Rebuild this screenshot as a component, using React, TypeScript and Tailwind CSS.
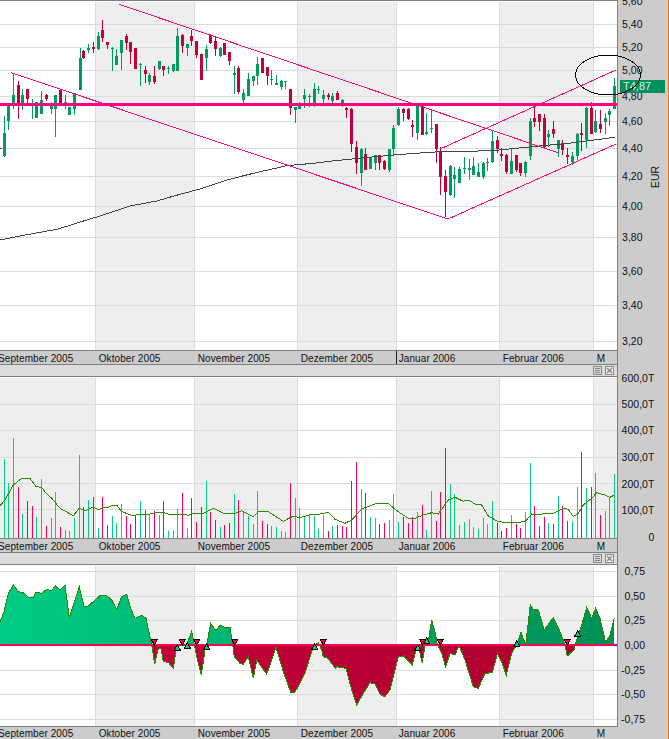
type Candle = [number, number, number, number, number, "g" | "r"]
type Bar = [number, number, "g" | "r"]
type Point = [number, number]

const GREEN = "#009c5e"
const RED = "#c4003a"
const PINK = "#f5107f"
const GRID = "#dcdcdc"
const SHADE = "#eeeeee"

// All series were read off the 3x crops: x is 3x page x, the right half starts at 1005
const candlesLeft: Candle[] = [
  [0, 445, 449, 445, 449, "r"], [13, 348, 470, 400, 470, "g"], [25, 316, 392, 316, 365, "g"], [40, 218, 325, 285, 310, "g"],
  [55, 243, 356, 255, 313, "r"], [67, 268, 330, 285, 310, "g"], [82, 268, 310, 268, 298, "r"], [97, 297, 356, 313, 316, "g"],
  [109, 307, 356, 307, 356, "g"], [124, 274, 342, 300, 342, "g"], [139, 283, 303, 286, 297, "r"], [154, 307, 342, 318, 327, "g"],
  [166, 285, 410, 285, 327, "g"], [181, 267, 313, 270, 313, "r"], [196, 286, 327, 307, 310, "g"], [208, 322, 345, 322, 345, "g"],
  [223, 278, 345, 279, 327, "g"], [239, 145, 270, 175, 270, "g"], [250, 150, 178, 153, 175, "r"], [265, 132, 158, 144, 150, "g"],
  [280, 125, 158, 141, 147, "r"], [295, 97, 150, 108, 147, "g"], [307, 60, 125, 90, 114, "r"], [322, 125, 147, 126, 135, "r"],
  [337, 142, 213, 144, 147, "g"], [349, 148, 195, 168, 195, "g"], [364, 120, 210, 120, 158, "g"], [379, 102, 150, 108, 129, "r"],
  [391, 126, 192, 126, 156, "r"], [406, 144, 207, 144, 207, "r"], [421, 189, 258, 191, 195, "g"], [436, 198, 250, 210, 222, "r"],
  [448, 219, 255, 225, 246, "g"], [463, 198, 252, 228, 246, "r"], [478, 183, 210, 183, 207, "g"], [490, 198, 228, 198, 210, "r"],
  [505, 198, 222, 204, 207, "g"], [520, 192, 215, 192, 213, "g"], [532, 84, 213, 108, 213, "g"], [547, 102, 160, 105, 138, "r"],
  [562, 132, 168, 132, 144, "g"], [574, 90, 138, 108, 123, "r"], [589, 123, 174, 123, 165, "r"], [604, 162, 240, 162, 240, "r"],
  [619, 135, 213, 147, 174, "g"], [631, 102, 132, 105, 129, "r"], [646, 108, 168, 123, 147, "r"], [661, 141, 171, 144, 168, "g"],
  [673, 129, 165, 129, 165, "r"], [688, 156, 195, 156, 183, "r"], [703, 198, 282, 219, 224, "g"], [715, 198, 282, 204, 276, "r"],
  [730, 267, 312, 279, 300, "g"], [745, 219, 288, 237, 288, "g"], [760, 228, 258, 228, 243, "g"], [772, 171, 255, 192, 228, "g"],
  [787, 174, 219, 174, 219, "r"], [802, 201, 255, 201, 228, "r"], [814, 210, 255, 237, 240, "g"], [829, 225, 255, 249, 255, "g"],
  [844, 240, 270, 243, 261, "g"], [856, 243, 268, 243, 246, "g"], [871, 267, 345, 267, 324, "r"], [886, 320, 368, 321, 330, "g"],
  [898, 306, 327, 315, 327, "g"], [913, 267, 325, 285, 297, "g"], [928, 282, 321, 288, 290, "g"], [943, 249, 320, 267, 310, "g"],
  [955, 258, 282, 267, 269, "g"], [970, 270, 310, 285, 297, "g"], [985, 279, 300, 285, 291, "r"], [997, 279, 310, 288, 303, "g"],
]

const candlesRight: Candle[] = [
  [7, 273, 300, 280, 300, "r"], [22, 297, 320, 300, 318, "g"], [34, 320, 354, 324, 330, "r"], [49, 325, 458, 327, 432, "r"],
  [64, 423, 521, 441, 489, "r"], [79, 445, 560, 447, 518, "g"], [91, 445, 510, 462, 510, "r"], [106, 474, 508, 474, 508, "g"],
  [121, 465, 510, 465, 489, "g"], [133, 465, 510, 465, 489, "r"], [148, 480, 510, 483, 507, "r"], [163, 447, 515, 447, 510, "g"],
  [175, 375, 465, 384, 447, "g"], [190, 320, 378, 327, 375, "g"], [205, 323, 363, 327, 339, "r"], [220, 323, 358, 327, 357, "r"],
  [232, 360, 412, 375, 381, "r"], [247, 310, 420, 315, 399, "g"], [262, 315, 405, 315, 405, "r"], [274, 340, 405, 396, 402, "g"],
  [289, 327, 400, 384, 387, "g"], [304, 372, 490, 372, 447, "r"], [316, 440, 585, 457, 531, "r"], [331, 510, 650, 528, 577, "r"],
  [346, 495, 588, 498, 585, "g"], [358, 500, 592, 525, 537, "g"], [373, 500, 548, 507, 548, "g"], [388, 470, 520, 504, 507, "g"],
  [403, 478, 540, 504, 510, "g"], [415, 470, 524, 498, 524, "g"], [430, 490, 530, 516, 530, "g"], [445, 485, 537, 488, 530, "g"],
  [457, 475, 515, 486, 489, "g"], [472, 390, 490, 423, 486, "g"], [487, 408, 460, 420, 447, "r"], [499, 445, 485, 462, 468, "r"],
  [514, 462, 522, 466, 516, "r"], [529, 447, 522, 483, 522, "g"], [544, 465, 515, 465, 510, "r"], [556, 490, 530, 490, 520, "r"],
  [571, 483, 530, 486, 520, "g"], [586, 355, 480, 363, 468, "g"], [598, 320, 380, 354, 366, "r"], [613, 342, 393, 342, 366, "r"],
  [628, 342, 447, 354, 441, "r"], [640, 390, 440, 402, 411, "g"], [655, 363, 414, 387, 402, "r"], [670, 420, 470, 420, 447, "g"],
  [682, 420, 465, 430, 450, "r"], [697, 445, 492, 465, 471, "r"], [712, 455, 495, 468, 486, "g"], [727, 400, 480, 403, 468, "g"],
  [739, 370, 455, 399, 405, "r"], [754, 320, 443, 325, 420, "g"], [769, 306, 402, 324, 402, "r"], [781, 330, 398, 363, 396, "g"],
  [796, 330, 398, 372, 387, "r"], [811, 340, 402, 354, 366, "g"], [823, 328, 378, 333, 345, "g"], [838, 234, 325, 258, 327, "g"],
]

const candles: Candle[] = [
  ...candlesLeft,
  ...candlesRight.map(([x, a, b, c, d, k]): Candle => [x + 1005, a, b, c, d, k]),
]

const smaLine: Point[] = [
  [0, 720], [60, 708], [120, 697], [170, 688], [220, 673], [260, 660], [310, 645], [390, 618], [470, 603], [540, 583],
  [600, 567], [680, 540], [760, 520], [860, 497], [940, 490], [1005, 482], [1105, 472], [1205, 463], [1305, 456],
  [1475, 452], [1595, 440], [1705, 430], [1845, 412],
]

const volumeLeft: Bar[] = [
  [13, 357, "g"], [25, 429, "g"], [40, 294, "g"], [55, 441, "r"], [67, 522, "g"], [82, 483, "r"], [97, 498, "r"], [109, 531, "g"],
  [124, 417, "g"], [139, 558, "r"], [154, 534, "g"], [166, 456, "g"], [181, 561, "r"], [196, 570, "g"], [208, 573, "g"], [223, 534, "g"],
  [238, 345, "g"], [250, 501, "r"], [265, 480, "g"], [280, 471, "r"], [295, 564, "g"], [307, 471, "r"], [322, 555, "r"], [337, 528, "g"],
  [349, 549, "g"], [364, 492, "g"], [379, 528, "r"], [391, 552, "r"], [406, 525, "r"], [421, 483, "g"], [436, 510, "r"], [448, 522, "g"],
  [463, 513, "r"], [478, 525, "g"], [490, 483, "r"], [505, 573, "g"], [520, 570, "g"], [532, 507, "g"], [547, 459, "r"], [562, 564, "g"],
  [574, 474, "r"], [589, 546, "r"], [604, 501, "r"], [619, 423, "g"], [631, 516, "r"], [646, 540, "r"], [661, 561, "g"], [673, 555, "r"],
  [688, 549, "r"], [703, 462, "g"], [715, 480, "r"], [730, 516, "g"], [745, 528, "g"], [760, 552, "g"], [772, 453, "g"], [787, 543, "r"],
  [802, 552, "r"], [814, 558, "g"], [829, 561, "g"], [844, 573, "g"], [856, 576, "g"], [871, 429, "r"], [886, 474, "g"], [898, 504, "g"],
  [913, 531, "g"], [928, 522, "g"], [943, 528, "g"], [955, 567, "g"], [970, 525, "g"], [985, 573, "r"], [997, 558, "g"],
]

const volumeRight: Bar[] = [
  [7, 555, "r"], [22, 558, "r"], [34, 561, "r"], [49, 423, "r"], [64, 366, "r"], [79, 447, "g"], [91, 459, "r"], [106, 531, "g"],
  [121, 534, "g"], [133, 552, "r"], [148, 549, "r"], [163, 540, "g"], [175, 462, "g"], [190, 546, "g"], [205, 531, "r"], [220, 549, "r"],
  [232, 531, "r"], [247, 516, "g"], [262, 495, "r"], [274, 570, "g"], [289, 453, "g"], [304, 543, "r"], [316, 456, "r"], [331, 324, "r"],
  [346, 432, "g"], [358, 462, "g"], [373, 555, "g"], [388, 546, "g"], [403, 537, "g"], [415, 561, "g"], [430, 567, "g"], [445, 534, "g"],
  [457, 552, "g"], [472, 483, "g"], [487, 549, "r"], [499, 573, "r"], [514, 564, "r"], [529, 525, "g"], [544, 552, "r"], [556, 564, "r"],
  [571, 516, "g"], [586, 369, "g"], [598, 498, "r"], [613, 558, "r"], [628, 531, "r"], [640, 549, "g"], [655, 552, "r"], [670, 468, "g"],
  [682, 498, "r"], [697, 543, "r"], [712, 543, "g"], [727, 441, "g"], [739, 336, "r"], [754, 444, "g"], [769, 441, "r"], [781, 399, "g"],
  [796, 525, "r"], [811, 513, "g"], [823, 471, "g"], [838, 402, "g"],
]

const volumeMa: Point[] = [
  [0, 497], [15, 480], [40, 435], [65, 415], [90, 415], [108, 440], [125, 442], [140, 462], [155, 475], [180, 505], [220, 527], [238, 505],
  [255, 513], [280, 500], [295, 510], [310, 502], [325, 502], [340, 495], [352, 497], [365, 515], [400, 527], [420, 522], [440, 525],
  [470, 517], [490, 517], [505, 522], [545, 522], [565, 526], [580, 520], [605, 522], [640, 505], [670, 520], [705, 520], [725, 512],
  [760, 530], [775, 516], [805, 515], [850, 544], [880, 528], [900, 533], [930, 524], [960, 522], [985, 517], [1005, 538], [1035, 550],
  [1055, 540], [1085, 507], [1125, 492], [1165, 491], [1195, 515], [1225, 535], [1245, 535], [1270, 525], [1295, 518], [1315, 522],
  [1345, 480], [1365, 472], [1390, 484], [1405, 480], [1425, 492], [1445, 495], [1465, 528], [1495, 545], [1535, 548], [1575, 545],
  [1595, 522], [1615, 525], [1635, 520], [1655, 522], [1690, 505], [1705, 508], [1720, 530], [1735, 520], [1750, 495], [1775, 475],
  [1790, 458], [1815, 465], [1830, 472], [1843, 465],
]

const oscillator: Point[] = [
  [0, 215], [12, 185], [25, 130], [40, 105], [55, 125], [70, 128], [85, 142], [100, 142], [108, 127], [125, 130], [140, 118], [155, 122],
  [165, 107], [180, 120], [195, 105], [208, 203], [225, 150], [238, 110], [252, 168], [265, 168], [285, 150], [300, 137], [320, 137],
  [335, 150], [350, 178], [365, 140], [380, 132], [392, 175], [405, 205], [425, 196], [438, 205], [455, 284], [464, 342], [475, 295],
  [483, 295], [490, 335], [505, 337], [520, 355], [530, 290], [548, 284], [560, 284], [575, 244], [583, 284], [590, 320], [604, 376],
  [615, 300], [620, 284], [632, 220], [648, 243], [660, 225], [675, 232], [690, 232], [698, 284], [703, 320], [720, 340], [730, 343],
  [745, 320], [760, 385], [770, 330], [800, 373], [828, 292], [850, 365], [872, 427], [885, 427], [915, 370], [938, 295], [945, 284],
  [955, 278], [965, 300], [970, 320], [985, 325], [1005, 355], [1010, 350], [1038, 355], [1055, 420], [1070, 466], [1090, 430],
  [1110, 398], [1125, 402], [1140, 433], [1155, 440], [1170, 420], [1195, 320], [1210, 318], [1237, 345], [1250, 290], [1260, 310],
  [1267, 340], [1275, 284], [1283, 284], [1295, 210], [1305, 245], [1312, 284], [1325, 310], [1337, 352], [1350, 310], [1365, 315],
  [1377, 287], [1395, 330], [1420, 410], [1435, 415], [1455, 370], [1477, 368], [1492, 312], [1505, 335], [1519, 376], [1535, 310],
  [1550, 284], [1563, 247], [1577, 284], [1591, 165], [1600, 178], [1615, 180], [1633, 240], [1660, 202], [1680, 245], [1695, 284],
  [1702, 318], [1722, 300], [1722, 284], [1725, 284], [1745, 225], [1760, 172], [1775, 205], [1787, 175], [1800, 205], [1817, 278],
  [1830, 255], [1843, 205],
]

const sellMarks = [463, 547, 590, 704, 970, 1268, 1321, 1702]
const buyMarks: Point[] = [[532, 284], [562, 278], [620, 282], [944, 281], [1253, 284], [1280, 263], [1550, 272], [1733, 242]]

const monthEdges = [95, 194, 297, 396, 499, 593]

function pts(points: Point[], top: number) {
  return points.map(([x, y]) => `${(x / 3).toFixed(1)},${(top + y / 3).toFixed(1)}`).join(" ")
}

function Bands({ y, height, first }: { y: number; height: number; first: "odd" | "even" }) {
  const edges = [0, ...monthEdges, 617]
  return (
    <>
      {edges.slice(0, -1).map((edge, i) => {
        const shaded = first === "even" ? i % 2 === 0 : i % 2 === 1
        return shaded ? <rect key={edge} x={edge} y={y} width={edges[i + 1] - edge} height={height} fill={SHADE} /> : null
      })}
      {monthEdges.map((edge) => (
        <rect key={edge} x={edge} y={y} width={1} height={height} fill={GRID} />
      ))}
    </>
  )
}

function HLines({ ys }: { ys: number[] }) {
  return (
    <>
      {ys.map((y) => (
        <rect key={y} x={0} y={Math.round(y)} width={617} height={1} fill={GRID} />
      ))}
    </>
  )
}

function PriceChart() {
  const ys = [24, 47, 70, 96, 121, 148, 176, 206, 237, 271, 305, 341]
  return (
    <svg viewBox="0 1 617 349" shapeRendering="crispEdges" className="block h-[349px] w-[617px] bg-white">
      <Bands y={2} height={348} first="odd" />
      <HLines ys={ys} />
      {candles.map(([x, hi, lo, top, bottom, kind]) => {
        const cx = Math.round(x / 3)
        const color = kind === "g" ? GREEN : RED
        return (
          <g key={x} fill={color}>
            <rect x={cx} y={Math.round(hi / 3)} width={1} height={Math.max(1, Math.round((lo - hi) / 3))} />
            <rect x={cx - 1} y={Math.round(top / 3)} width={3} height={Math.max(1, Math.round((bottom - top) / 3))} />
          </g>
        )
      })}
      <polyline points={pts(smaLine, 0)} fill="none" stroke="#444444" strokeWidth={1} />
      <g stroke={PINK} strokeWidth={1} fill="none">
        <line x1={119} y1={4.3} x2={558} y2={152.7} />
        <polyline points="11,72.7 448,219 616,144" />
        <line x1={440} y1={149} x2={616} y2={70} />
      </g>
      <rect x={0} y={103} width={617} height={3} fill="#ff0080" />
    </svg>
  )
}

function VolumeChart() {
  const ys = [404, 430, 457, 483, 509]
  const bars: Bar[] = [...volumeLeft, ...volumeRight.map(([x, y, k]): Bar => [x + 1005, y, k])]
  return (
    <svg viewBox="0 377 617 161" shapeRendering="crispEdges" className="block h-[161px] w-[617px] bg-white">
      <Bands y={378} height={160} first="even" />
      <HLines ys={ys} />
      {bars.map(([x, y, kind]) => {
        const top = Math.round(340 + y / 3)
        return <rect key={x} x={Math.round(x / 3)} y={top} width={1} height={538 - top} fill={kind === "g" ? "#00d080" : "#ff0050"} />
      })}
      <polyline points={pts(volumeMa, 340)} fill="none" stroke="#2a8a00" strokeWidth={1} />
    </svg>
  )
}

function OscillatorChart() {
  const ys = [571, 596, 620, 670, 694, 719]
  const zero = 644.7
  const area = `0,${zero} ${pts(oscillator, 550)} 614.3,${zero}`
  return (
    <svg viewBox="0 565 617 161" shapeRendering="crispEdges" className="block h-[161px] w-[617px] bg-white">
      <defs>
        <linearGradient id="oscGreen" gradientUnits="userSpaceOnUse" x1={0} y1={0} x2={617} y2={0}>
          <stop offset="0" stopColor="#00cc85" />
          <stop offset="1" stopColor="#008f55" />
        </linearGradient>
        <linearGradient id="oscRed" gradientUnits="userSpaceOnUse" x1={0} y1={0} x2={617} y2={0}>
          <stop offset="0" stopColor="#cc003c" />
          <stop offset="1" stopColor="#ac0030" />
        </linearGradient>
        <clipPath id="oscAbove">
          <rect x={0} y={565} width={617} height={zero - 565} />
        </clipPath>
        <clipPath id="oscBelow">
          <rect x={0} y={zero} width={617} height={726 - zero} />
        </clipPath>
      </defs>
      <Bands y={566} height={160} first="odd" />
      <HLines ys={ys} />
      <polygon points={area} fill="url(#oscGreen)" clipPath="url(#oscAbove)" />
      <polygon points={area} fill="url(#oscRed)" clipPath="url(#oscBelow)" />
      <polyline points={pts(oscillator, 550)} fill="none" stroke="#2a8a00" strokeWidth={1} />
      <rect x={0} y={644} width={615} height={2} fill="#ff0055" />
      <rect x={615} y={644} width={2} height={2} fill="#2030c0" />
      {sellMarks.map((x) => {
        const cx = x / 3
        return <polygon key={x} points={`${cx - 3},639.5 ${cx + 3},639.5 ${cx},645`} fill="#ff0050" stroke="#000000" strokeWidth={1} />
      })}
      {buyMarks.map(([x, y]) => {
        const cx = x / 3
        const top = 550 + y / 3
        return <polygon key={x} points={`${cx},${top} ${cx + 3},${top + 5.5} ${cx - 3},${top + 5.5}`} fill="#00cc85" stroke="#000000" strokeWidth={1} />
      })}
    </svg>
  )
}

function DateStrip({ className }: { className: string }) {
  return (
    <div className={`flex items-center overflow-hidden bg-[#cccccc] pt-[2px] text-[10px] leading-none tracking-[0.1px] text-[#111111] ${className}`}>
      <span className="ml-[-2px] w-[100.7px] shrink-0">September 2005</span>
      <span className="w-[99px] shrink-0">Oktober 2005</span>
      <span className="w-[103px] shrink-0">November 2005</span>
      <span className="w-[98px] shrink-0">Dezember 2005</span>
      <span className="w-[104px] shrink-0">Januar 2006</span>
      <span className="w-[94px] shrink-0">Februar 2006</span>
      <span className="shrink-0">M</span>
    </div>
  )
}

function PanelHeader() {
  return (
    <div className="flex h-3 items-center justify-end gap-[3px] border-b border-[#808080] bg-[#dcdcdc] pr-[3px]">
      <svg width="9" height="9" viewBox="0 0 9 9" className="block">
        <rect x="0.5" y="0.5" width="8" height="8" fill="#d4d4d4" stroke="#8a8a8a" />
        <path d="M2 2.5H7M2 4.5H7M2 6.5H7" stroke="#8a8a8a" />
      </svg>
      <svg width="9" height="9" viewBox="0 0 9 9" className="block">
        <rect x="0.5" y="0.5" width="8" height="8" fill="#f0f0f0" stroke="#8a8a8a" />
        <path d="M2 2L7 7M7 2L2 7" stroke="#8a8a8a" strokeWidth="1.6" />
      </svg>
    </div>
  )
}

// Tick rows take their height from the distance to the next tick
function Axis({ ticks, right, className }: { ticks: [string, number][]; right: number; className: string }) {
  return (
    <div className={`flex flex-col items-end overflow-hidden text-[10.5px] leading-[12px] text-[#111111] ${className}`} style={{ paddingRight: right }}>
      {ticks.map(([label, y], i) => (
        <div key={label} className="shrink-0" style={{ height: i < ticks.length - 1 ? ticks[i + 1][1] - y : 12 }}>
          {label}
        </div>
      ))}
    </div>
  )
}

export default function App() {
  return (
    <div className="relative flex h-[739px] w-[669px] flex-col overflow-hidden border-r border-[#f07010] bg-[#cccccc] font-['Liberation_Sans',Arial,sans-serif]">
      <div className="flex h-[365px] shrink-0">
        <div className="w-[618px] shrink-0 border-t border-r border-[#808080]">
          <PriceChart />
          <DateStrip className="relative h-[15px] border-y border-[#808080]" />
        </div>
        <Axis
          className="mt-[-5px] flex-1"
          right={25.5}
          ticks={[["5,60", 1], ["5,40", 24], ["5,20", 47], ["5,00", 70], ["4,80", 96], ["4,60", 121], ["4,40", 148], ["4,20", 176], ["4,00", 206], ["3,80", 237], ["3,60", 271], ["3,40", 305], ["3,20", 341]]}
        />
      </div>
      <div className="flex h-[188px] shrink-0">
        <div className="w-[618px] shrink-0 border-r border-[#808080]">
          <PanelHeader />
          <VolumeChart />
          <DateStrip className="h-[15px] border-y border-[#808080]" />
        </div>
        <Axis
          className="mt-[7px] flex-1"
          right={13.7}
          ticks={[["600,0T", 378], ["500,0T", 404], ["400,0T", 430], ["300,0T", 457], ["200,0T", 484], ["100,0T", 510], ["0", 537]]}
        />
      </div>
      <div className="flex h-[186px] shrink-0">
        <div className="w-[618px] shrink-0">
          <div className="border-r border-[#808080]">
            <PanelHeader />
            <OscillatorChart />
          </div>
          <DateStrip className="h-[13px] border-t border-[#808080]" />
        </div>
        <Axis
          className="mt-[12px] flex-1"
          right={23}
          ticks={[["0,75", 571], ["0,50", 596], ["0,25", 620], ["0,00", 645], ["-0,25", 670], ["-0,50", 694], ["-0,75", 719]]}
        />
      </div>

      <div className="absolute left-[396px] top-[351px] h-[13px] w-px bg-[#222222]" />
      <span className="absolute left-[644px] top-[170.5px] -rotate-90 text-[10.5px] leading-[12px] text-[#111111]">EUR</span>
      <div className="absolute left-[620px] top-[80px] flex h-[13px] w-[45px] items-center bg-[#009060] pl-[3px] text-[11px] leading-none text-[#d8f5e4]">T4,87</div>
      <svg className="pointer-events-none absolute left-[570px] top-[50px]" width="80" height="50" viewBox="0 0 80 50" shapeRendering="crispEdges">
        <ellipse cx="38" cy="25" rx="32.5" ry="20" fill="none" stroke="#000000" strokeWidth="1" />
      </svg>
      <div className="absolute left-[668px] top-[435px] h-[54px] w-px bg-[#1a1aa0]" />
    </div>
  )
}
